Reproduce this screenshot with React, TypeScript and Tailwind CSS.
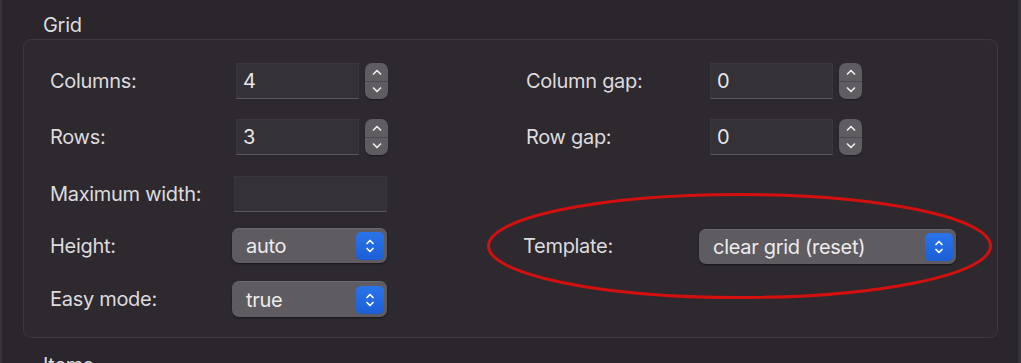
import React from "react";

const Chevrons = ({ className }: { className?: string }) => (
  <svg viewBox="0 0 10 18" className={className} fill="none" stroke="currentColor" strokeWidth={1.7} strokeLinecap="round" strokeLinejoin="round">
    <path d="M2 6.5 L5 3.5 L8 6.5" />
    <path d="M2 11.5 L5 14.5 L8 11.5" />
  </svg>
);

const Stepper = ({ className = "" }: { className?: string }) => (
  <div className={`flex h-[36px] w-[23px] flex-col overflow-hidden rounded-[7px] bg-[#5f5c62] text-[#ebebeb] shadow-[0_1px_1px_rgba(0,0,0,0.35)] ${className}`}>
    <div className="flex flex-1 items-center justify-center border-b border-[#4b484e]">
      <svg viewBox="0 0 10 6" className="h-[6px] w-[10px]" fill="none" stroke="currentColor" strokeWidth={1.7} strokeLinecap="round" strokeLinejoin="round">
        <path d="M1.5 5 L5 1.5 L8.5 5" />
      </svg>
    </div>
    <div className="flex flex-1 items-center justify-center">
      <svg viewBox="0 0 10 6" className="h-[6px] w-[10px]" fill="none" stroke="currentColor" strokeWidth={1.7} strokeLinecap="round" strokeLinejoin="round">
        <path d="M1.5 1 L5 4.5 L8.5 1" />
      </svg>
    </div>
  </div>
);

const Field = ({ value, className = "" }: { value?: string; className?: string }) => (
  <div className={`flex h-[36px] items-center border border-[#3a373c] border-b-[#5a575d] bg-[#343137] pl-[6px] text-[#e6e6e6] ${className}`}>
    {value}
  </div>
);

const NumberField = ({ value, className = "" }: { value: string; className?: string }) => (
  <div className={`flex items-center ${className}`}>
    <Field value={value} className="w-[123px]" />
    <Stepper className="ml-[6px]" />
  </div>
);

const Popup = ({ value, className = "" }: { value: string; className?: string }) => (
  <div className={`flex h-[35px] items-center justify-between rounded-[7px] border-t border-[#6c696f] bg-[#5e5b61] pl-[14px] pr-[3px] text-[#ececec] shadow-[0_1px_2px_rgba(0,0,0,0.45)] ${className}`}>
    <span>{value}</span>
    <div className="flex h-[28px] w-[28px] items-center justify-center rounded-[5px] bg-[linear-gradient(#2a74ea,#1b5fd6)] text-white">
      <Chevrons className="h-[18px] w-[10px]" />
    </div>
  </div>
);

const Label = ({ children, className = "" }: { children: React.ReactNode; className?: string }) => (
  <div className={`flex h-[36px] items-center ${className}`}>{children}</div>
);

export default function App() {
  return (
    <div className="relative h-[363px] w-[1021px] overflow-hidden border-l-2 border-r-[3px] border-[#37333a] bg-[#2a262b] font-['Inter',sans-serif] text-[20px] leading-6 tracking-[-0.3px] text-[#dddbde]">
      <div className="pl-[41px] pt-[13px]">Grid</div>
      <div className="ml-[21px] mt-[2px] h-[299px] w-[975px] rounded-[8px] border border-[#3b383e] bg-[#2d292f] pl-[26px] pt-[23px]">
        <div className="grid grid-cols-[182px_291px_176px_1fr] grid-rows-[56px_57px_52px_53px_36px] items-start">
          <Label>Columns:</Label>
          <NumberField value="4" className="ml-[4px]" />
          <Label className="ml-[3px]">Column gap:</Label>
          <NumberField value="0" className="ml-[11px]" />

          <Label>Rows:</Label>
          <NumberField value="3" className="ml-[4px]" />
          <Label className="ml-[3px]">Row gap:</Label>
          <NumberField value="0" className="ml-[11px]" />

          <Label>Maximum width:</Label>
          <Field className="ml-[2px] h-[35px] w-[153px]" />
          <div />
          <div />

          <Label className="h-[35px]">Height:</Label>
          <Popup value="auto" className="w-[155px]" />
          <Label className="h-[35px]">Template:</Label>
          <Popup value="clear grid (reset)" className="mt-[1px] h-[34px] w-[257px]" />

          <Label>Easy mode:</Label>
          <Popup value="true" className="h-[36px] w-[155px]" />
          <div />
          <div />
        </div>
      </div>
      {/* next group's title, mostly below the fold */}
      <div className="pl-[41px] pt-[15px]">Items</div>

      <svg className="pointer-events-none absolute left-0 top-0" width="1021" height="363" viewBox="0 0 1021 363" fill="none">
        <ellipse cx="737.5" cy="246" rx="251" ry="51.5" stroke="#d4100f" strokeWidth="3" />
      </svg>
    </div>
  );
}
